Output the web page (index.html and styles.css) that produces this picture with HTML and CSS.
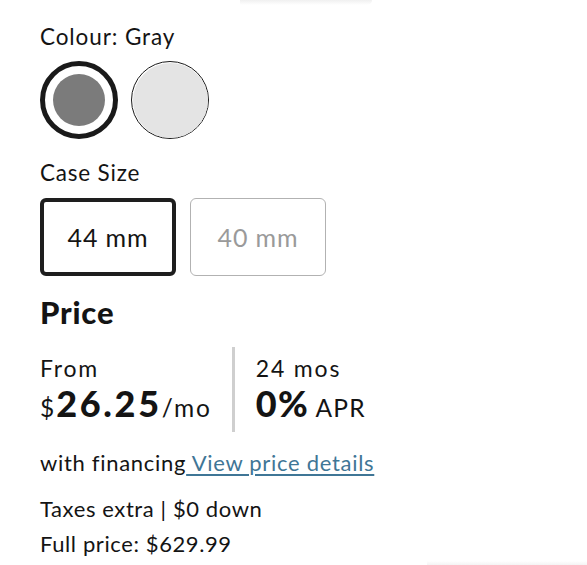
FILE: index.html
```html
<!DOCTYPE html>
<html lang="en">
<head>
<meta charset="utf-8">
<title>Product options</title>
<link rel="stylesheet" href="styles.css">
</head>
<body>
<main class="page">
  <div class="top-shadow"></div>
  <section class="option">
    <div class="label">Colour: Gray</div>
    <div class="swatches">
      <button class="swatch selected" aria-label="Gray"><span class="dot dot-gray"></span></button>
      <button class="swatch" aria-label="Silver"><span class="dot dot-light"></span></button>
    </div>
  </section>
  <section class="option option-size">
    <div class="label">Case Size</div>
    <div class="sizes">
      <button class="size selected">44 mm</button>
      <button class="size disabled">40 mm</button>
    </div>
  </section>
  <h2 class="price-title">Price</h2>
  <div class="financing">
    <div class="fin-col">
      <div class="fin-top">From</div>
      <div class="fin-main"><span class="small">$</span><span class="big">26.25</span><span class="small">/mo</span></div>
    </div>
    <div class="divider"></div>
    <div class="fin-col fin-apr">
      <div class="fin-top">24 mos</div>
      <div class="fin-main"><span class="big">0%</span><span class="small"> APR</span></div>
    </div>
  </div>
  <p class="with">with financing<a href="#" class="link"> View price details</a></p>
  <p class="notes">Taxes extra | $0 down<br>Full price: $629.99</p>
  <div class="bottom-shadow"></div>
</main>
</body>
</html>
```
FILE: styles.css
```css
* { box-sizing: border-box; }
html, body { margin: 0; padding: 0; background: #fff; }
body {
  font-family: Lato, "Noto Sans", "Liberation Sans", sans-serif;
  color: #141414;
  width: 587px;
  height: 565px;
  overflow: hidden;
  letter-spacing: 0.7px;
}
.page {
  padding: 0 0 0 40px;
  display: flex;
  flex-direction: column;
  align-items: flex-start;
}
.top-shadow {
  width: 132px;
  height: 5px;
  margin-left: 200px;
  background: linear-gradient(to bottom, #f0f0f0, rgba(255,255,255,0));
  border-radius: 0 0 40px 10px;
}
.option { display: flex; flex-direction: column; }
.label {
  font-size: 22.5px;
  line-height: 28px;
  margin-top: 18px;
  letter-spacing: 0.9px;
}
.option-size .label { margin-top: 20px; letter-spacing: 0.8px; }
.swatches { display: flex; gap: 13px; margin-top: 10px; }
.swatch {
  width: 78px; height: 78px;
  border-radius: 50%;
  border: 1.5px solid #1a1a1a;
  background: #fff;
  padding: 0;
  display: flex; align-items: center; justify-content: center;
}
.swatch.selected { border: 5px solid #1a1a1a; }
.dot { border-radius: 50%; display: block; }
.dot-gray { width: 52px; height: 52px; background: #7b7b7b; }
.dot-light { width: 75px; height: 75px; background: #e4e4e4; }
.sizes { display: flex; gap: 14px; margin-top: 11px; }
.size {
  width: 136px; height: 78px;
  font-family: inherit;
  font-size: 25px;
  letter-spacing: 0.9px;
  background: #fff;
  border-radius: 6px;
  color: #141414;
  padding: 0;
}
.size.selected { border: 4px solid #1e1e1e; }
.size.disabled { border: 1.5px solid #b2b2b2; color: #9a9a9a; }
.price-title {
  font-size: 31px;
  line-height: 36px;
  font-weight: 900;
  letter-spacing: 0.8px;
  margin: 18px 0 0;
}
.financing {
  display: flex;
  margin-top: 17px;
  align-items: stretch;
}
.fin-col { display: flex; flex-direction: column; }
.fin-top { font-size: 23px; line-height: 30px; margin-top: 6px; letter-spacing: 1.8px; }
.fin-main { line-height: 40px; white-space: nowrap; }
.small { font-size: 24.5px; letter-spacing: 1.9px; }
.big { font-size: 36px; font-weight: 900; letter-spacing: 2.7px; }
.fin-apr .big { letter-spacing: 1.2px; }
.fin-apr .small { letter-spacing: 1.2px; }
.divider {
  width: 3px;
  height: 85px;
  background: #cfcfcf;
  margin: 0 21px 0 20px;
}
.with {
  font-size: 22px;
  line-height: 28px;
  margin: 17px 0 0;
}
.link { color: #3f7696; text-decoration: underline; text-decoration-thickness: 1.5px; text-underline-offset: 3px; }
.notes {
  font-size: 22px;
  line-height: 35px;
  margin: 14px 0 0;
  letter-spacing: 0.6px;
}
.bottom-shadow {
  align-self: flex-end;
  width: 160px;
  height: 6px;
  margin-top: 0;
  background: linear-gradient(to top, #eeeeee, rgba(255,255,255,0));
}
```
